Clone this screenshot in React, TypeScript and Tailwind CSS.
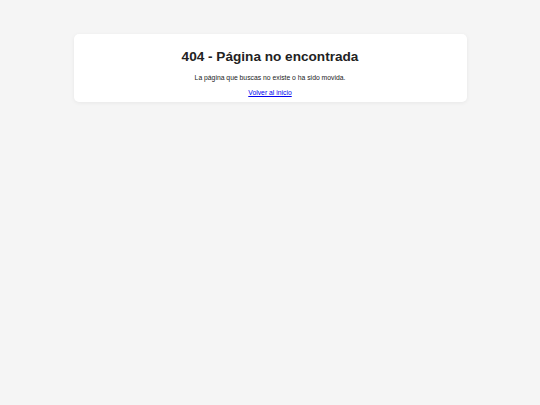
import React from 'react';

const App: React.FC = () => {
  return (
    <div className="min-h-[405px] bg-[#f5f5f5] pt-[34px] font-['Liberation_Sans',Arial,sans-serif]">
      <div className="mx-auto w-[393px] rounded-[5px] bg-white px-4 pt-[15px] pb-[5px] text-center shadow-[0_1px_4px_rgba(0,0,0,0.06)]">
        <h1 className="text-[13.6px] leading-[16px] font-bold text-[#222]">404 - Página no encontrada</h1>
        <p className="mt-[8px] text-[6.8px] leading-[9px] text-[#222]">La página que buscas no existe o ha sido movida.</p>
        <p className="mt-[6px] text-[6.8px] leading-[9px]">
          <a href="#" className="text-[#0000ee] underline">
            Volver al inicio
          </a>
        </p>
      </div>
    </div>
  );
};

export default App;
